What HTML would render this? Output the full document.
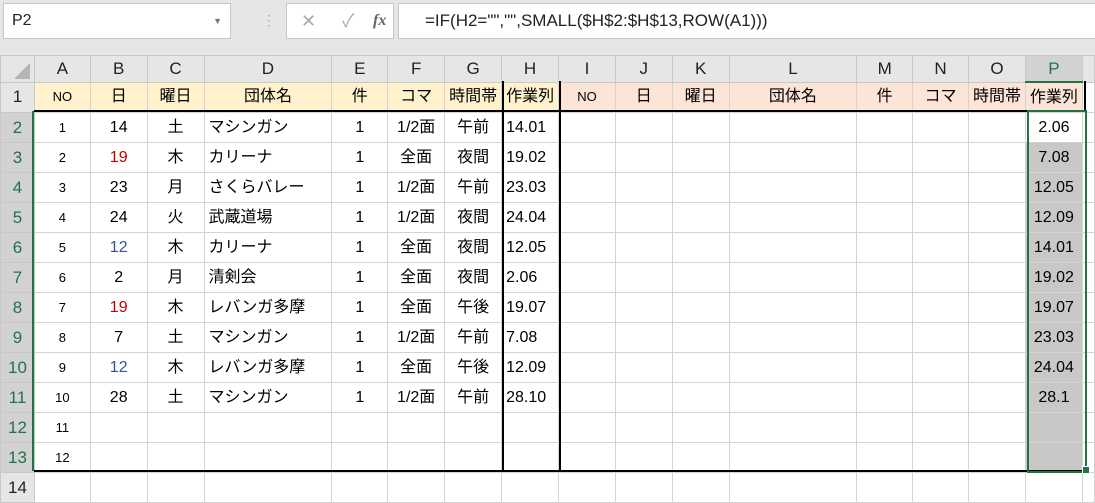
<!DOCTYPE html>
<html><head><meta charset="utf-8"><style>
body{margin:0;width:1095px;height:481px;overflow:hidden;background:#e6e6e6;font-family:"Liberation Sans","Noto Sans CJK JP",sans-serif;position:relative}
.box{position:absolute;background:#fff;border:1px solid #c6c6c6;box-sizing:border-box}
table{position:absolute;left:0;top:55px;border-collapse:collapse;table-layout:fixed}
td{border:1px solid #d4d4d4;height:29px;padding:0;font-size:16px;line-height:20px;text-align:center;vertical-align:middle;white-space:nowrap;overflow:hidden;background:#fff;color:#000}
tr.h td{height:25px;line-height:18px;background:#e6e6e6;color:#222;font-size:17px;border-color:#c8c8c8}
td.rh{background:#e6e6e6;color:#222;font-size:17px;border-color:#c8c8c8}
td.rs{background:#d2d2d2;color:#217346}
.y{background:#fff2cc!important}.o{background:#fce4d6!important}
.l{text-align:left;padding-left:4px}.s{font-size:13px}
.r{color:#c00000}.b{color:#2f5597}
.g{background:#c8c8c8!important}
.v{position:absolute;background:#000}
</style></head><body>
<div class="box" style="left:3px;top:3px;width:228px;height:36px;font-size:16px;line-height:34px;padding-left:8px;color:#222">P2<span style="position:absolute;right:8px;top:0;font-size:9px;color:#777">▼</span></div>
<div style="position:absolute;left:262px;top:12px;color:#aaa;font-size:14px">⋮</div>
<div class="box" style="left:286px;top:3px;width:108px;height:36px;color:#aaa;font-size:18px;line-height:34px"><span style="position:absolute;left:14px">✕</span><span style="position:absolute;left:55px">✓</span><span style="position:absolute;left:86px;font-family:'Liberation Serif',serif;font-style:italic;font-weight:bold;color:#666;font-size:16px">fx</span></div>
<div class="box" style="left:398px;top:3px;width:700px;height:36px;font-size:17px;line-height:34px;padding-left:26px;color:#222">=IF(H2="","",SMALL($H$2:$H$13,ROW(A1)))</div>
<table>
<colgroup><col style="width:34px"><col style="width:56px"><col style="width:57px"><col style="width:57px"><col style="width:128px"><col style="width:56px"><col style="width:57px"><col style="width:57px"><col style="width:57px"><col style="width:57px"><col style="width:57px"><col style="width:57px"><col style="width:128px"><col style="width:56px"><col style="width:56px"><col style="width:57px"><col style="width:57px"><col style="width:12px"></colgroup>
<tr class="h"><td style="position:relative"><svg width="20" height="18" style="position:absolute;right:2px;bottom:2px"><polygon points="18,1 18,17 2,17" fill="#b5b5b5"/></svg></td><td>A</td><td>B</td><td>C</td><td>D</td><td>E</td><td>F</td><td>G</td><td>H</td><td>I</td><td>J</td><td>K</td><td>L</td><td>M</td><td>N</td><td>O</td><td style="background:#d2d2d2;color:#217346;border-bottom:2px solid #217346">P</td><td></td></tr>
<tr><td class="rh">1</td><td class="y s">NO</td><td class="y">日</td><td class="y">曜日</td><td class="y">団体名</td><td class="y">件</td><td class="y">コマ</td><td class="y">時間帯</td><td class="y">作業列</td><td class="o s">NO</td><td class="o">日</td><td class="o">曜日</td><td class="o">団体名</td><td class="o">件</td><td class="o">コマ</td><td class="o">時間帯</td><td class="o">作業列</td><td></td></tr>
<tr><td class="rh rs">2</td><td class="s">1</td><td>14</td><td>土</td><td class="l">マシンガン</td><td>1</td><td>1/2面</td><td>午前</td><td class="l">14.01</td><td></td><td></td><td></td><td></td><td></td><td></td><td></td><td>2.06</td><td></td></tr>
<tr><td class="rh rs">3</td><td class="s">2</td><td class="r">19</td><td>木</td><td class="l">カリーナ</td><td>1</td><td>全面</td><td>夜間</td><td class="l">19.02</td><td></td><td></td><td></td><td></td><td></td><td></td><td></td><td class="g">7.08</td><td></td></tr>
<tr><td class="rh rs">4</td><td class="s">3</td><td>23</td><td>月</td><td class="l">さくらバレー</td><td>1</td><td>1/2面</td><td>午前</td><td class="l">23.03</td><td></td><td></td><td></td><td></td><td></td><td></td><td></td><td class="g">12.05</td><td></td></tr>
<tr><td class="rh rs">5</td><td class="s">4</td><td>24</td><td>火</td><td class="l">武蔵道場</td><td>1</td><td>1/2面</td><td>夜間</td><td class="l">24.04</td><td></td><td></td><td></td><td></td><td></td><td></td><td></td><td class="g">12.09</td><td></td></tr>
<tr><td class="rh rs">6</td><td class="s">5</td><td class="b">12</td><td>木</td><td class="l">カリーナ</td><td>1</td><td>全面</td><td>夜間</td><td class="l">12.05</td><td></td><td></td><td></td><td></td><td></td><td></td><td></td><td class="g">14.01</td><td></td></tr>
<tr><td class="rh rs">7</td><td class="s">6</td><td>2</td><td>月</td><td class="l">清剣会</td><td>1</td><td>全面</td><td>夜間</td><td class="l">2.06</td><td></td><td></td><td></td><td></td><td></td><td></td><td></td><td class="g">19.02</td><td></td></tr>
<tr><td class="rh rs">8</td><td class="s">7</td><td class="r">19</td><td>木</td><td class="l">レバンガ多摩</td><td>1</td><td>全面</td><td>午後</td><td class="l">19.07</td><td></td><td></td><td></td><td></td><td></td><td></td><td></td><td class="g">19.07</td><td></td></tr>
<tr><td class="rh rs">9</td><td class="s">8</td><td>7</td><td>土</td><td class="l">マシンガン</td><td>1</td><td>1/2面</td><td>午前</td><td class="l">7.08</td><td></td><td></td><td></td><td></td><td></td><td></td><td></td><td class="g">23.03</td><td></td></tr>
<tr><td class="rh rs">10</td><td class="s">9</td><td class="b">12</td><td>木</td><td class="l">レバンガ多摩</td><td>1</td><td>全面</td><td>午後</td><td class="l">12.09</td><td></td><td></td><td></td><td></td><td></td><td></td><td></td><td class="g">24.04</td><td></td></tr>
<tr><td class="rh rs">11</td><td class="s">10</td><td>28</td><td>土</td><td class="l">マシンガン</td><td>1</td><td>1/2面</td><td>午前</td><td class="l">28.10</td><td></td><td></td><td></td><td></td><td></td><td></td><td></td><td class="g">28.1</td><td></td></tr>
<tr><td class="rh rs">12</td><td class="s">11</td><td></td><td></td><td></td><td></td><td></td><td></td><td></td><td></td><td></td><td></td><td></td><td></td><td></td><td></td><td class="g"></td><td></td></tr>
<tr><td class="rh rs">13</td><td class="s">12</td><td></td><td></td><td></td><td></td><td></td><td></td><td></td><td></td><td></td><td></td><td></td><td></td><td></td><td></td><td class="g"></td><td></td></tr>
<tr><td class="rh">14</td><td></td><td></td><td></td><td></td><td></td><td></td><td></td><td></td><td></td><td></td><td></td><td></td><td></td><td></td><td></td><td></td><td></td></tr>
</table>
<div class="v" style="left:34px;top:110px;width:1051px;height:2px"></div>
<div class="v" style="left:34px;top:470px;width:1051px;height:2px"></div>
<div class="v" style="left:502px;top:81px;width:2px;height:390px"></div>
<div class="v" style="left:559px;top:81px;width:2px;height:390px"></div>
<div class="v" style="left:1084px;top:81px;width:2px;height:30px"></div>
<div style="position:absolute;left:32px;top:111px;width:2px;height:360px;background:#217346"></div>
<div style="position:absolute;left:1027px;top:110px;width:56px;height:359px;border:2px solid #217346"></div>
<div style="position:absolute;left:1082px;top:466px;width:6px;height:6px;background:#217346;border:1px solid #fff"></div>
</body></html>
